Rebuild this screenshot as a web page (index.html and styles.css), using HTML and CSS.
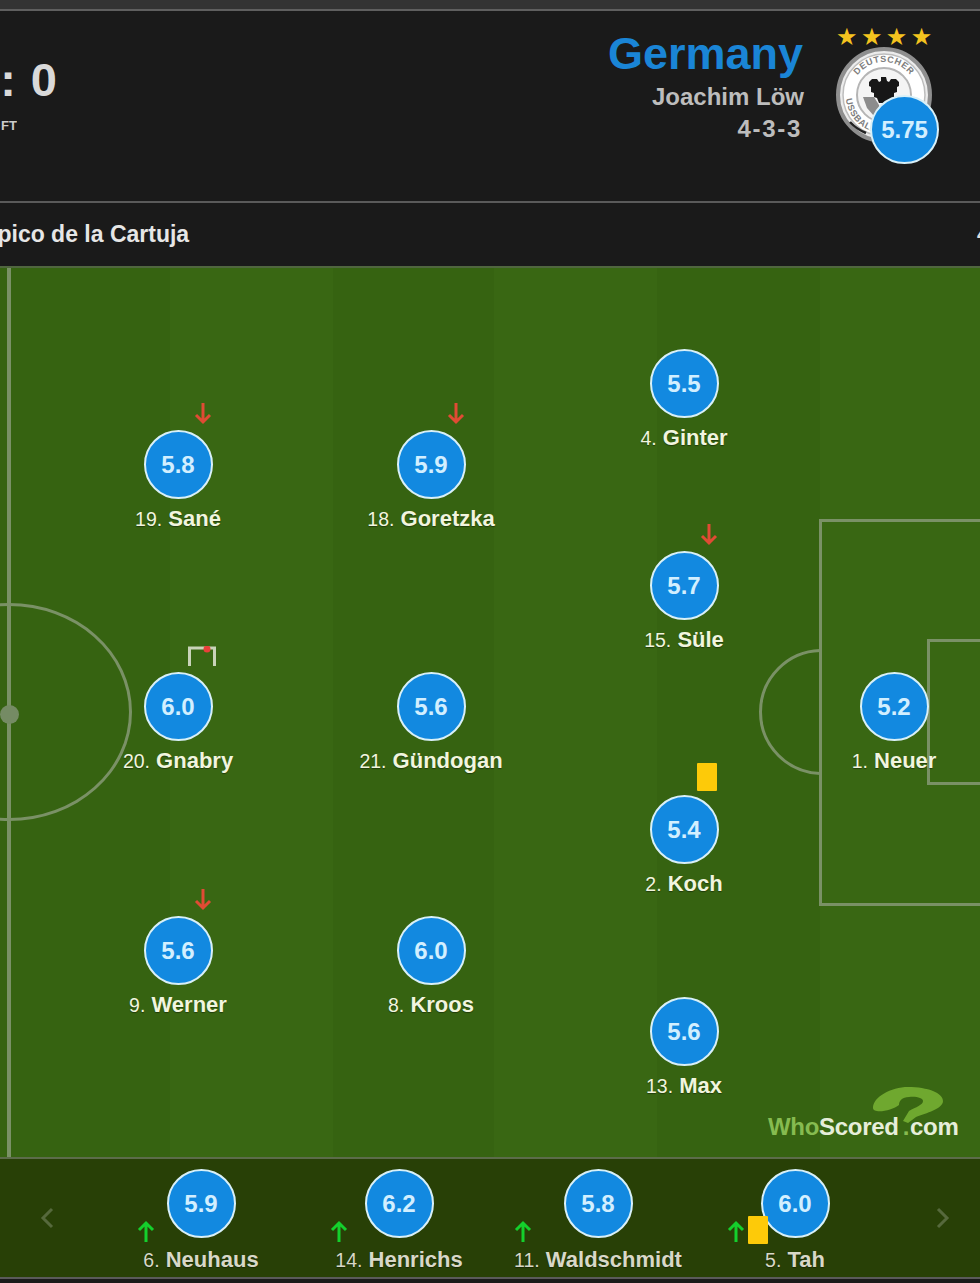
FILE: index.html
```html
<!DOCTYPE html>
<html lang="en">
<head>
<meta charset="utf-8">
<title>Germany line-up</title>
<link rel="stylesheet" href="styles.css">
</head>
<body>
<div class="topstrip"></div>
<header class="match">
  <div class="score-block">
    <div class="score">: 0</div>
    <div class="ft">FT</div>
  </div>
  <div class="team">
    <div class="team-text">
      <div class="team-name">Germany</div>
      <div class="manager">Joachim Löw</div>
      <div class="formation">4-3-3</div>
    </div>
    <div class="crest-wrap">
      <div class="stars">★★★★</div>
      <svg class="crest" viewBox="0 0 96 96" aria-hidden="true">
        <defs>
          <path id="crest-top" d="M15 48a33 33 0 0 1 66 0"/>
          <path id="crest-bottom" d="M10 52a38 38 0 0 0 50 32"/>
        </defs>
        <circle cx="48" cy="48" r="46" fill="#ececec" stroke="#8f8f8f" stroke-width="4"/>
        <circle cx="48" cy="48" r="41" fill="#fff" stroke="#bdbdbd" stroke-width="1.5"/>
        <circle cx="48" cy="48" r="27" fill="#f4f4f4" stroke="#b5b5b5" stroke-width="2"/>
        <text class="crest-text"><textPath href="#crest-top" startOffset="50%" text-anchor="middle">DEUTSCHER</textPath></text>
        <text class="crest-text"><textPath href="#crest-bottom" startOffset="30%" text-anchor="middle">FUSSBALL</textPath></text>
        <path d="M27 50l11 0 5 8 2 12-7-1-7-8z" fill="#8c8c8c"/>
        <path d="M45 30h5l1 4 2 1 2-3h5l3 3v4l-2 1v5l-3 1v4l-3 1-2 5H43l-2-5-3-1v-4l-3-1v-5l-2-1v-4l3-3h5l2 3 2-1z" fill="#171717"/>
        <path d="M14 75a44 44 0 0 0 16 11" fill="none" stroke="#222" stroke-width="2.5"/>
      </svg>
      <div class="rating rating-team">5.75</div>
    </div>
  </div>
</header>
<div class="venue">
  <span>mpico de la Cartuja</span>
  <span class="venue-edge">4</span>
</div>
<main class="pitch">
  <div class="stripes">
    <i></i><i></i><i></i><i></i><i></i><i></i>
  </div>
  <div class="halfway"></div>
  <div class="center-circle"></div>
  <div class="center-spot"></div>
  <div class="box-arc"></div>
  <div class="box-large"></div>
  <div class="box-small"></div>

  <div class="player" id="p-sane"><div class="rating">5.8</div><div class="name"><small>19.</small> Sané</div>
    <svg class="ev ev-off" viewBox="0 0 20 24"><path d="M10 2v19M3 14l7 7 7-7"/></svg></div>
  <div class="player" id="p-goretzka"><div class="rating">5.9</div><div class="name"><small>18.</small> Goretzka</div>
    <svg class="ev ev-off" viewBox="0 0 20 24"><path d="M10 2v19M3 14l7 7 7-7"/></svg></div>
  <div class="player" id="p-ginter"><div class="rating">5.5</div><div class="name"><small>4.</small> Ginter</div></div>
  <div class="player" id="p-sule"><div class="rating">5.7</div><div class="name"><small>15.</small> Süle</div>
    <svg class="ev ev-off" viewBox="0 0 20 24"><path d="M10 2v19M3 14l7 7 7-7"/></svg></div>
  <div class="player" id="p-gnabry"><div class="rating">6.0</div><div class="name"><small>20.</small> Gnabry</div>
    <svg class="goal" viewBox="0 0 28 20"><path d="M1.5 20V2h25v18"/><circle cx="19" cy="3" r="3.5"/></svg></div>
  <div class="player" id="p-gundogan"><div class="rating">5.6</div><div class="name"><small>21.</small> Gündogan</div></div>
  <div class="player" id="p-koch"><div class="rating">5.4</div><div class="name"><small>2.</small> Koch</div><span class="card"></span></div>
  <div class="player" id="p-neuer"><div class="rating">5.2</div><div class="name"><small>1.</small> Neuer</div></div>
  <div class="player" id="p-werner"><div class="rating">5.6</div><div class="name"><small>9.</small> Werner</div>
    <svg class="ev ev-off" viewBox="0 0 20 24"><path d="M10 2v19M3 14l7 7 7-7"/></svg></div>
  <div class="player" id="p-kroos"><div class="rating">6.0</div><div class="name"><small>8.</small> Kroos</div></div>
  <div class="player" id="p-max"><div class="rating">5.6</div><div class="name"><small>13.</small> Max</div></div>

  <div class="logo">
    <svg class="logo-mark" viewBox="0 0 72 36"><path d="M1 21C1 10 19 0 36 0c20 0 35 6 35 14 0 8-17 12-27 16l-8 6-5-2 6-10c7-4 14-6 14-10 0-3-7-5-14-4-7 0-10 4-10 8C20 24 1 27 1 21z"/></svg>
    <span class="who">Who</span><span class="scored">Scored</span><span class="who dot">.</span><span class="scored">com</span>
  </div>
</main>
<section class="bench">
  <svg class="chev" viewBox="0 0 14 24"><path d="M12 3L3 12l9 9"/></svg>
  <div class="sub sub-a"><svg class="ev ev-on" viewBox="0 0 20 24"><path d="M10 22V3M3 10l7-7 7 7"/></svg><div class="rating">5.9</div><div class="name"><small>6.</small> Neuhaus</div></div>
  <div class="sub sub-b"><svg class="ev ev-on" viewBox="0 0 20 24"><path d="M10 22V3M3 10l7-7 7 7"/></svg><div class="rating">6.2</div><div class="name"><small>14.</small> Henrichs</div></div>
  <div class="sub sub-c"><svg class="ev ev-on" viewBox="0 0 20 24"><path d="M10 22V3M3 10l7-7 7 7"/></svg><div class="rating">5.8</div><div class="name"><small>11.</small> Waldschmidt</div></div>
  <div class="sub sub-d"><svg class="ev ev-on" viewBox="0 0 20 24"><path d="M10 22V3M3 10l7-7 7 7"/></svg><span class="card"></span><div class="rating">6.0</div><div class="name"><small>5.</small> Tah</div></div>
  <svg class="chev chev-r" viewBox="0 0 14 24"><path d="M2 3l9 9-9 9"/></svg>
</section>
<div class="bottomstrip"></div>
</body>
</html>
```
FILE: styles.css
```css
* { box-sizing: border-box; }
html, body { margin: 0; padding: 0; }
body {
  width: 980px;
  height: 1283px;
  overflow: hidden;
  background: #1a1a1a;
  font-family: "Liberation Sans", Arial, sans-serif;
  display: flex;
  flex-direction: column;
}
.topstrip { height: 11px; background: #333; border-bottom: 2px solid #5f5f5f; flex: none; }

.match {
  height: 192px;
  flex: none;
  position: relative;
  background: #1a1a1a;
  border-bottom: 2px solid #5a5a5a;
  display: flex;
  justify-content: space-between;
}
.score-block { position: relative; width: 60px; }
.score { position: absolute; right: 3px; top: 42px; color: #d9d9d9; font-size: 47px; font-weight: 700; line-height: 54px; white-space: nowrap; word-spacing: 2px; }
.ft { position: absolute; left: 0; top: 107px; width: 17px; text-align: right; color: #ccc; font-size: 13px; font-weight: 700; line-height: 16px; overflow: hidden; }
.team { display: flex; }
.team-text { width: 210px; margin-right: 32px; text-align: right; padding-top: 18px; }
.team-name { color: #1a85d6; font-size: 45px; font-weight: 700; line-height: 50px; padding-right: 1px; }
.manager { color: #bdbdbd; font-size: 24px; font-weight: 700; line-height: 30px; margin-top: 3px; }
.formation { color: #bdbdbd; font-size: 24px; font-weight: 700; line-height: 30px; letter-spacing: 1.7px; margin-top: 2px; padding-right: 2px; }
.crest-wrap { position: relative; width: 144px; }
.stars { position: absolute; left: 0; top: 12px; color: #f4c31f; font-size: 24px; line-height: 28px; letter-spacing: 3.4px; white-space: nowrap; font-family: "DejaVu Sans", sans-serif; }
.crest { position: absolute; left: 0; top: 36px; width: 96px; height: 96px; }
.crest-text { font-size: 9px; font-weight: 700; fill: #7d7d7d; letter-spacing: .6px; }

.rating {
  width: 69px;
  height: 69px;
  border-radius: 50%;
  background: #1289e0;
  border: 2px solid #d8f0f8;
  color: #d2efff;
  font-size: 24px;
  font-weight: 700;
  display: flex;
  align-items: center;
  justify-content: center;
  flex: none;
}
.rating-team { position: absolute; left: 34px; top: 84px; }

.venue {
  height: 63px;
  flex: none;
  background: #1a1a1a;
  display: flex;
  align-items: center;
  justify-content: space-between;
  color: #e6e6e6;
  font-size: 23px;
  font-weight: 700;
  margin-left: -23px;
  margin-right: -8px;
}
.venue-edge { font-size: 20px; color: #ddd; }

.pitch { position: relative; height: 891px; flex: none; border-top: 2px solid #50663f; overflow: hidden; background: #376410; }
.stripes { position: absolute; inset: 0; display: flex; }
.stripes i { display: block; width: 163px; flex: none; }
.stripes i:nth-child(1) { width: 170px; background: #366311; }
.stripes i:nth-child(2) { background: #396713; }
.stripes i:nth-child(3) { width: 161px; background: #366311; }
.stripes i:nth-child(4) { background: #396713; }
.stripes i:nth-child(5) { background: #366311; }
.stripes i:nth-child(6) { width: 160px; background: #396713; }

.halfway { position: absolute; left: 7px; top: 0; bottom: 0; width: 4px; background: #7a9166; }
.center-circle { position: absolute; left: -114px; top: 335px; width: 246px; height: 218px; border: 3px solid #7a9166; border-radius: 50%; }
.center-spot { position: absolute; left: 0; top: 437px; width: 19px; height: 19px; border-radius: 50%; background: #758b64; }
.box-large { position: absolute; left: 819px; top: 251px; width: 200px; height: 387px; border: 3px solid #7a9166; }
.box-small { position: absolute; left: 927px; top: 371px; width: 100px; height: 146px; border: 3px solid #7a9166; }
.box-arc { position: absolute; left: 759px; top: 381px; width: 126px; height: 126px; border: 3px solid #7a9166; border-radius: 50%; clip-path: inset(0 65px 0 0); }

.player { position: absolute; width: 220px; margin-left: -110px; display: flex; flex-direction: column; align-items: center; }
.name { color: #f1f5df; font-size: 22px; font-weight: 700; line-height: 26px; margin-top: 7px; white-space: nowrap; text-shadow: 0 1px 1px rgba(0,0,0,.4); }
.name small { font-size: 19.5px; font-weight: 400; }

#p-sane { left: 178px; top: 162px; }
#p-goretzka { left: 431px; top: 162px; }
#p-ginter { left: 684px; top: 81px; }
#p-sule { left: 684px; top: 283px; }
#p-gnabry { left: 178px; top: 404px; }
#p-gundogan { left: 431px; top: 404px; }
#p-koch { left: 684px; top: 527px; }
#p-neuer { left: 894px; top: 404px; }
#p-werner { left: 178px; top: 648px; }
#p-kroos { left: 431px; top: 648px; }
#p-max { left: 684px; top: 729px; }

.ev { position: absolute; width: 20px; height: 24px; fill: none; stroke-width: 3; }
.ev-off { stroke: #e04b34; left: 125px; top: -29px; }
.ev-on { stroke: #14d02c; }
.goal { position: absolute; left: 120px; top: -26px; width: 28px; height: 20px; fill: none; stroke: #c9d3b9; stroke-width: 3; }
.goal circle { fill: #e8403a; stroke: none; }
.card { position: absolute; width: 20px; height: 28px; background: #fdca09; border-radius: 1px; left: 123px; top: -32px; }

.logo { position: absolute; left: 768px; top: 845px; font-size: 24px; font-weight: 700; line-height: 28px; letter-spacing: -.3px; white-space: nowrap; }
.logo-mark { position: absolute; left: 104px; top: -26px; width: 72px; height: 36px; fill: #6fa82f; }
.logo span { position: relative; }
.who { color: #86bb50; }
.dot { margin: 0 1px 0 4px; }
.scored { color: #e6eeda; }

.bench { position: relative; height: 120px; flex: none; background: #284006; border-top: 2px solid #5c6c4a; }
.chev { position: absolute; top: 47px; width: 14px; height: 24px; fill: none; stroke: #56693c; stroke-width: 3; left: 40px; }
.chev-r { left: 936px; }
.sub { position: absolute; top: 10px; width: 220px; margin-left: -110px; display: flex; flex-direction: column; align-items: center; }
.sub .name { color: #d8d8c8; margin-top: 9px; }
.sub-a { left: 201px; }
.sub-b { left: 399px; }
.sub-c { left: 598px; }
.sub-d { left: 795px; }
.sub .ev-on { top: 51px; }
.sub-a .ev-on { left: 45px; }
.sub-b .ev-on { left: 40px; }
.sub-c .ev-on { left: 25px; }
.sub-d .ev-on { left: 41px; }
.sub-d .rating { position: relative; }
.sub .card { left: 63px; top: 47px; z-index: 1; }

.bottomstrip { flex: 1; background: #1a1a1a; border-top: 2px solid #5a5a5a; }
```
